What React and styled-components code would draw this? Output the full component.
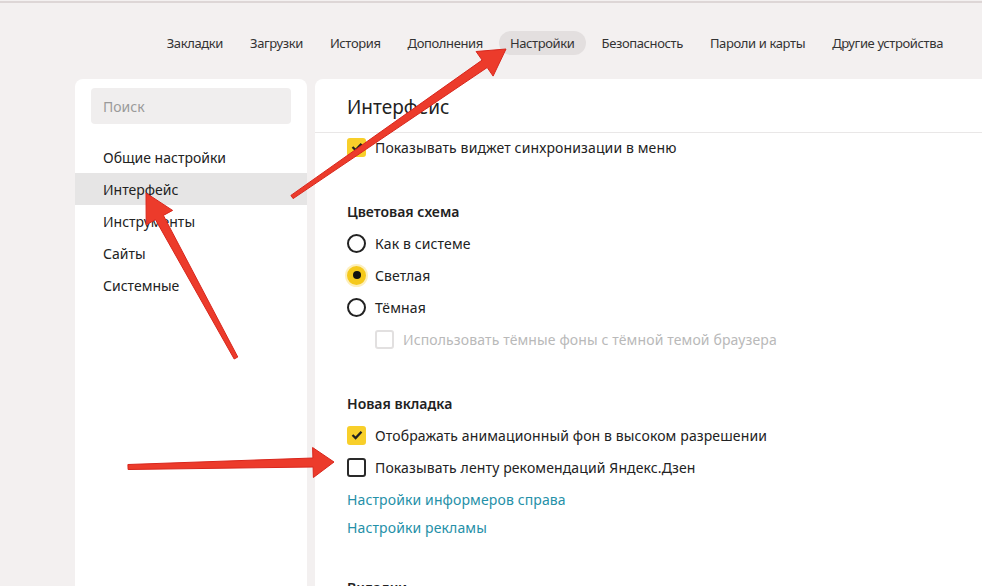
import styled, { createGlobalStyle } from 'styled-components'

const GlobalStyle = createGlobalStyle`
  html, body {
    margin: 0;
    padding: 0;
    background: #f3f0f0;
    font-family: "Noto Sans", "Open Sans", sans-serif;
    color: #222;
    overflow: hidden;
  }
`

const tabs = [
  'Закладки',
  'Загрузки',
  'История',
  'Дополнения',
  'Настройки',
  'Безопасность',
  'Пароли и карты',
  'Другие устройства'
]

const menu = ['Общие настройки', 'Интерфейс', 'Инструменты', 'Сайты', 'Системные']

// annotation arrows: tail, tip, widths
const arrows = [
  { from: [292, 197], to: [506, 49], w0: 4, w1: 9, hw: 30, hl: 26 },
  { from: [236, 358], to: [146, 193], w0: 4, w1: 9, hw: 30, hl: 28 },
  { from: [128, 467], to: [334, 462], w0: 5, w1: 9, hw: 30, hl: 21 }
]

function arrowPoints ({ from, to, w0, w1, hw, hl }) {
  const dx = to[0] - from[0]
  const dy = to[1] - from[1]
  const len = Math.hypot(dx, dy)
  const ux = dx / len
  const uy = dy / len
  const nx = -uy
  const ny = ux
  const bx = to[0] - ux * hl
  const by = to[1] - uy * hl
  const p = (x, y, k) => `${(x + nx * k).toFixed(1)},${(y + ny * k).toFixed(1)}`
  return [
    p(from[0], from[1], w0 / 2),
    p(bx, by, w1 / 2),
    p(bx, by, hw / 2),
    `${to[0]},${to[1]}`,
    p(bx, by, -hw / 2),
    p(bx, by, -w1 / 2),
    p(from[0], from[1], -w0 / 2)
  ].join(' ')
}

export default function App () {
  return (
    <Page>
      <GlobalStyle />
      <TopLine />
      <Nav>
        {tabs.map(t => (
          <Tab key={t} active={t === 'Настройки'}>{t}</Tab>
        ))}
      </Nav>
      <Body>
        <Sidebar>
          <Search placeholder='Поиск' />
          <Menu>
            {menu.map(m => (
              <MenuItem key={m} active={m === 'Интерфейс'}>{m}</MenuItem>
            ))}
          </Menu>
        </Sidebar>
        <Main>
          <Header>Интерфейс</Header>
          <Content>
            <Row>
              <Checkbox checked />
              <Label>Показывать виджет синхронизации в меню</Label>
            </Row>

            <Section>
              <SectionTitle>Цветовая схема</SectionTitle>
              <Row>
                <Radio />
                <Label>Как в системе</Label>
              </Row>
              <Row>
                <Radio checked />
                <Label>Светлая</Label>
              </Row>
              <Row>
                <Radio />
                <Label>Тёмная</Label>
              </Row>
              <Row indent>
                <Checkbox disabled />
                <Label disabled>Использовать тёмные фоны с тёмной темой браузера</Label>
              </Row>
            </Section>

            <Section>
              <SectionTitle>Новая вкладка</SectionTitle>
              <Row>
                <Checkbox checked />
                <Label>Отображать анимационный фон в высоком разрешении</Label>
              </Row>
              <Row>
                <Checkbox />
                <Label>Показывать ленту рекомендаций Яндекс.Дзен</Label>
              </Row>
              <LinkRow>Настройки информеров справа</LinkRow>
              <LinkRow>Настройки рекламы</LinkRow>
            </Section>

            <Section>
              <SectionTitle>Вкладки</SectionTitle>
            </Section>
          </Content>
        </Main>
      </Body>
      <Overlay width='982' height='586' viewBox='0 0 982 586'>
        {arrows.map((a, i) => (
          <polygon
            key={i}
            points={arrowPoints(a)}
            fill='#ec3b2b'
            stroke='#d8261c'
            strokeWidth='1'
            strokeLinejoin='round'
          />
        ))}
      </Overlay>
    </Page>
  )
}

function Checkbox ({ checked, disabled }) {
  return (
    <Box checked={checked} disabled={disabled}>
      {checked && (
        <svg width='14' height='14' viewBox='0 0 14 14'>
          <polyline
            points='2.5,7 5.6,10 11.5,3.8'
            fill='none'
            stroke='#222'
            strokeWidth='2.3'
          />
        </svg>
      )}
    </Box>
  )
}

function Radio ({ checked }) {
  return <RadioCircle checked={checked}>{checked && <Dot />}</RadioCircle>
}

const Page = styled.div`
  position: relative;
  width: 982px;
  height: 586px;
  overflow: hidden;
`

const TopLine = styled.div`
  height: 2px;
  margin-top: 1px;
  background: #ddd6d6;
`

const Nav = styled.nav`
  display: flex;
  justify-content: flex-end;
  align-items: center;
  gap: 5px;
  height: 24px;
  margin-top: 28px;
  padding-right: 28px;
`

const Tab = styled.div`
  font-size: 13px;
  line-height: 24px;
  padding: 0 11px;
  border-radius: 12px;
  color: #333;
  letter-spacing: -0.38px;
  white-space: nowrap;
  background: ${p => (p.active ? '#e3dfdf' : 'transparent')};
`

const Body = styled.div`
  display: flex;
  gap: 8px;
  margin-top: 24px;
  padding-left: 75px;
`

const Sidebar = styled.aside`
  flex: 0 0 232px;
  height: 520px;
  background: #fff;
  border-radius: 8px;
  padding-top: 9px;
`

const Search = styled.input`
  display: block;
  box-sizing: border-box;
  width: 200px;
  height: 36px;
  margin: 0 16px;
  padding: 0 12px;
  border: none;
  border-radius: 4px;
  background: #f0eeee;
  font-family: inherit;
  font-size: 14px;
  outline: none;
  &::placeholder {
    color: #9a9a9a;
  }
`

const Menu = styled.div`
  margin-top: 17px;
`

const MenuItem = styled.div`
  height: 32px;
  line-height: 34px;
  padding-left: 28px;
  font-size: 14px;
  color: #222;
  background: ${p => (p.active ? '#e6e5e5' : 'transparent')};
`

const Main = styled.main`
  flex: 0 0 720px;
  height: 520px;
  background: #fff;
  border-radius: 8px 0 0 0;
`

const Header = styled.h1`
  margin: 0;
  height: 53px;
  line-height: 56px;
  padding-left: 32px;
  font-size: 19px;
  font-weight: 400;
  color: #222;
  border-bottom: 1px solid #e9e7e7;
`

const Content = styled.div`
  padding-left: 32px;
  margin-top: -2px;
`

const Section = styled.section`
  margin-top: 32px;
`

const SectionTitle = styled.h2`
  margin: 0;
  height: 32px;
  line-height: 34px;
  font-size: 14px;
  font-weight: 600;
  color: #222;
`

const Row = styled.div`
  display: flex;
  align-items: center;
  gap: 9px;
  height: 32px;
  padding-left: ${p => (p.indent ? '28px' : '0')};
`

const Label = styled.span`
  font-size: 14px;
  letter-spacing: 0.12px;
  color: ${p => (p.disabled ? '#b9b9b9' : '#222')};
  white-space: nowrap;
`

const Box = styled.span`
  box-sizing: border-box;
  display: flex;
  align-items: center;
  justify-content: center;
  width: 19px;
  height: 19px;
  border-radius: 3px;
  border: 2px solid ${p => (p.checked ? '#f8cf2a' : p.disabled ? '#e2e0e0' : '#2a2a2a')};
  background: ${p => (p.checked ? '#f8cf2a' : '#fff')};
`

const RadioCircle = styled.span`
  box-sizing: border-box;
  display: flex;
  align-items: center;
  justify-content: center;
  width: 19px;
  height: 19px;
  border-radius: 50%;
  border: 2px solid ${p => (p.checked ? '#f5c91c' : '#222')};
  background: ${p => (p.checked ? '#f5c91c' : '#fff')};
  box-shadow: ${p => (p.checked ? '0 0 0 2px rgba(250, 210, 60, 0.35)' : 'none')};
`

const Dot = styled.span`
  width: 8px;
  height: 8px;
  border-radius: 50%;
  background: #111;
`

const LinkRow = styled.a`
  display: block;
  height: 28px;
  line-height: 34px;
  font-size: 14px;
  letter-spacing: 0.12px;
  color: #2590a8;
  text-decoration: none;
`

const Overlay = styled.svg`
  position: absolute;
  left: 0;
  top: 0;
  pointer-events: none;
`
